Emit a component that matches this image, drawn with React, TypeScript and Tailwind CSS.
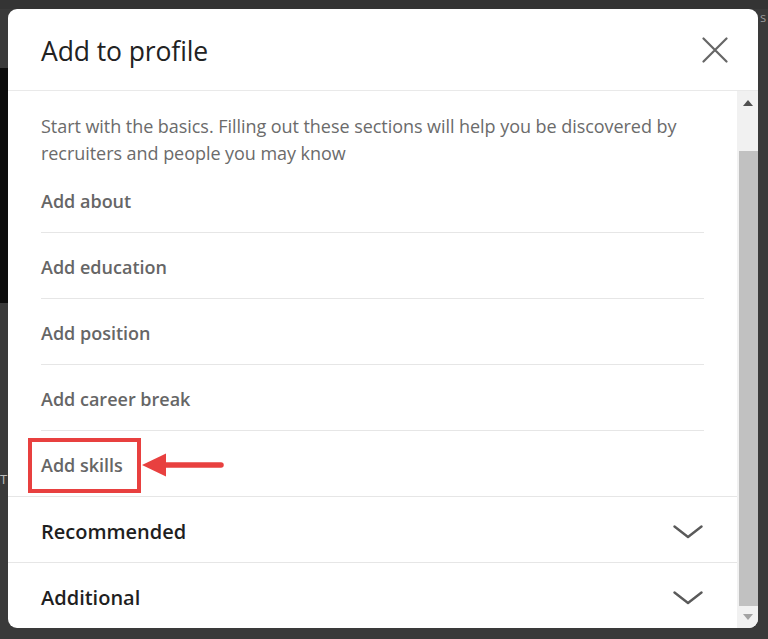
import React from "react";

const items = ["Add about", "Add education", "Add position", "Add career break"];

function Chevron() {
  return (
    <svg width="30" height="14" viewBox="0 0 30 14">
      <polyline points="1.5,1.5 15,12 28.5,1.5" fill="none" stroke="#5a5a5a" strokeWidth="2.4" strokeLinecap="round" strokeLinejoin="round" />
    </svg>
  );
}

export default function App() {
  return (
    <div
      className="w-[768px] h-[639px] bg-[#3a3a3a] relative overflow-hidden"
      style={{ fontFamily: '"Open Sans", "Noto Sans", sans-serif' }}
    >
      {/* background fragments */}
      <div className="absolute left-0 top-0 w-[768px] h-[9px] bg-[#343434]" />
      <div className="absolute left-0 top-[68px] w-[10px] h-[235px] bg-[#0c0c0c]" />
      <div className="absolute left-0 top-[470px] text-[13px] text-[#bbb]">T</div>
      <div className="absolute left-[760px] top-[8px] text-[13px] text-[#999]">s</div>

      <div className="absolute left-[8px] top-[9px] w-[750px] h-[619px] bg-white rounded-[9px] overflow-hidden flex flex-col">
        {/* header */}
        <div className="h-[82px] shrink-0 border-b border-[#e9e9e9] flex items-center justify-between pl-[33px] pr-[30px] pt-[2px]">
          <h2 className="text-[26.5px] leading-[34px] text-[#222222] font-normal tracking-[-0.1px]">Add to profile</h2>
          <svg width="26" height="26" viewBox="0 0 26 26" className="mt-[-2px]">
            <path d="M1.5 1.5 L24.5 24.5 M24.5 1.5 L1.5 24.5" stroke="#666" strokeWidth="2.2" strokeLinecap="round" />
          </svg>
        </div>

        {/* body */}
        <div className="flex flex-1 min-h-0">
          <div className="flex-1 flex flex-col">
            <div className="px-[33px]">
              <p className="pt-[22px] text-[18px] leading-[27px] text-[#6b6b6b] tracking-[-0.05px]">
                Start with the basics. Filling out these sections will help you be discovered by recruiters and people you may know
              </p>
              {items.map((t) => (
                <div key={t} className="h-[66px] border-b border-[#e6e6e6] flex items-center pt-[4px]">
                  <span className="text-[18px] font-semibold text-[#666666]">{t}</span>
                </div>
              ))}
              <div className="h-[65px] flex items-center pt-[4px] relative">
                <span className="text-[18px] font-semibold text-[#666666]">Add skills</span>
                <div className="absolute left-[-13px] top-[7px] w-[113px] h-[55px] border-[4px] border-[#e8403f]" />
                <svg className="absolute left-[100px] top-[21px]" width="86" height="26" viewBox="0 0 86 26">
                  <polygon points="1,13 25,1.5 25,24.5" fill="#e8403f" />
                  <line x1="22" y1="13" x2="80" y2="13" stroke="#e8403f" strokeWidth="5.5" strokeLinecap="round" />
                </svg>
              </div>
            </div>
            <div className="h-[66px] border-t border-[#e6e6e6] flex items-center justify-between pl-[33px] pr-[34px] pt-[4px]">
              <span className="text-[20px] font-semibold text-[#1f1f1f]">Recommended</span>
              <Chevron />
            </div>
            <div className="flex-1 border-t border-[#e6e6e6] flex items-center justify-between pl-[33px] pr-[34px] pt-[4px]">
              <span className="text-[20px] font-semibold text-[#1f1f1f]">Additional</span>
              <Chevron />
            </div>
          </div>

          {/* scrollbar */}
          <div className="w-[21px] shrink-0 bg-[#f1f1f1] flex flex-col items-center pl-[1px]">
            <div className="h-[24px] w-full flex items-center justify-center">
              <svg width="10" height="6" viewBox="0 0 10 6"><polygon points="5,0 10,6 0,6" fill="#505050" /></svg>
            </div>
            <div className="h-[36px]" />
            <div className="w-[19px] h-[455px] bg-[#c1c1c1]" />
            <div className="flex-1 w-full flex items-center justify-center">
              <svg width="10" height="6" viewBox="0 0 10 6"><polygon points="0,0 10,0 5,6" fill="#a3a3a3" /></svg>
            </div>
          </div>
        </div>
      </div>
    </div>
  );
}
